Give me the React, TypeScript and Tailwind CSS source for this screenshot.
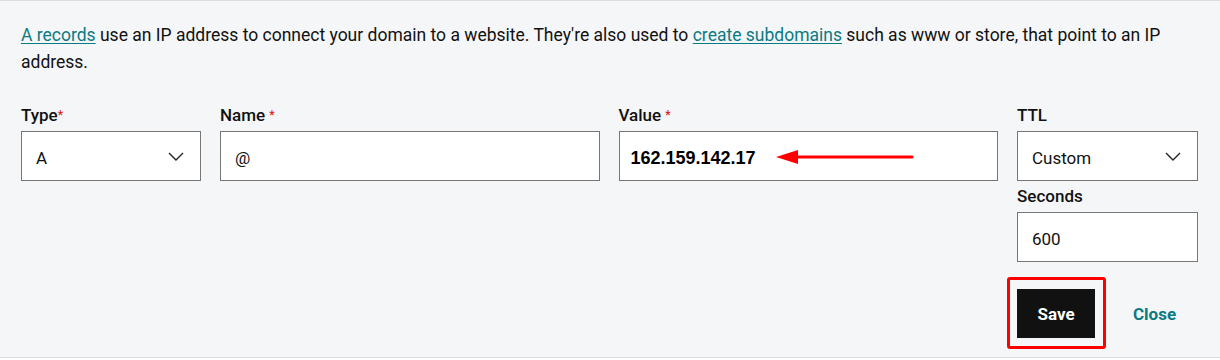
import React from 'react';

const font = { fontFamily: 'Roboto, "Liberation Sans", sans-serif' };

function Chevron() {
  return (
    <svg width="16" height="9" viewBox="0 0 16 9" fill="none" className="text-[#222]">
      <path d="M1 1l7 7 7-7" stroke="currentColor" strokeWidth="1.4" />
    </svg>
  );
}

function Label({ text, required, tight }: { text: string; required?: boolean; tight?: boolean }) {
  return (
    <div className="h-[22px] mb-[5px] text-[17px] leading-[22px] font-medium text-[#111]">
      {text}
      {required && (
        <span className={`text-[#e0201b] text-[12px] align-top ${tight ? '' : 'ml-[4px]'}`}>*</span>
      )}
    </div>
  );
}

function Box({ children, select, pad = 'pl-[14px]' }: { children: React.ReactNode; select?: boolean; pad?: string }) {
  return (
    <div className={`h-[50px] bg-white border border-[#777] flex items-center justify-between ${pad} pr-[16px] text-[17px] text-[#111]`}>
      <div className="flex items-center pt-[5px]">{children}</div>
      {select && <Chevron />}
    </div>
  );
}

export default function App() {
  return (
    <div style={font} className="h-[358px] bg-[#f5f6f8] border-t border-b border-[#d8dde3] pl-[21px] pr-[22px] pt-[21px]">
      <p className="text-[17.5px] leading-[27px] text-[#111]">
        <a className="text-[#0b7a83] underline underline-offset-2">A records</a> use an IP address to connect your domain to a
        website. They're also used to <a className="text-[#0b7a83] underline underline-offset-2">create subdomains</a> such
        as www or store, that point to an IP address.
      </p>

      <div className="grid grid-cols-[180px_1fr_1fr_181px] gap-x-[19px] mt-[28px]">
        <div>
          <Label text="Type" required tight />
          <Box select>A</Box>
        </div>
        <div>
          <Label text="Name" required />
          <Box>@</Box>
        </div>
        <div>
          <Label text="Value" required />
          <Box pad="pl-[11px]">
            <span className="font-bold text-[18px] text-black" style={{ fontFamily: '"Liberation Sans", Arial, sans-serif' }}>
              162.159.142.17
            </span>
            <svg width="140" height="16" viewBox="0 0 140 16" className="ml-[19px] -mt-[3px]">
              <path d="M22 8H137" stroke="#f00" strokeWidth="3" strokeLinecap="round" />
              <path d="M1 8L23 1V15Z" fill="#f00" />
            </svg>
          </Box>
        </div>
        <div>
          <Label text="TTL" />
          <Box select>Custom</Box>
          <div className="mt-[4px]">
            <Label text="Seconds" />
            <Box>600</Box>
          </div>
          <div className="flex items-center mt-[15px] -ml-[10px]">
            <div className="border-[3px] border-[#f00] rounded-[3px] pl-[7px] pr-[8px] pt-[9px] pb-[8px]">
              <button className="w-[78px] h-[49px] bg-[#111] text-white font-bold text-[17px] pt-[3px]">Save</button>
            </div>
            <button className="ml-[27px] mt-[3px] text-[#0b7a83] font-bold text-[17px]">Close</button>
          </div>
        </div>
      </div>
    </div>
  );
}
